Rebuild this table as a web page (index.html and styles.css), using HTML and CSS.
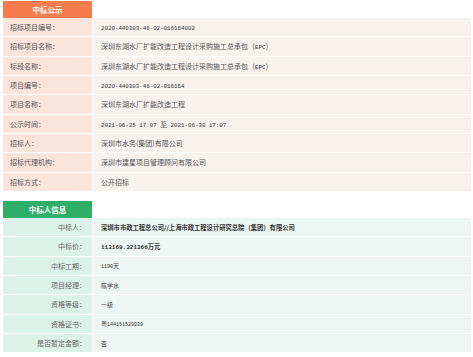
FILE: index.html
```html
<!DOCTYPE html>
<html lang="zh-CN">
<head>
  <meta charset="UTF-8" />
  <title>中标公示</title>
  <link rel="stylesheet" href="styles.css">
</head>
<body>
  <div class="page">
    <div class="block notice">
      <div class="tab">中标公示</div>
      <table class="info">
        <tr><th>招标项目编号：</th><td><span class="num">2020-440303-46-02-016164002</span></td></tr>
        <tr><th>招标项目名称：</th><td>深圳东湖水厂扩能改造工程设计采购施工总承包（<span class="num">EPC</span>）</td></tr>
        <tr><th>标段名称：</th><td>深圳东湖水厂扩能改造工程设计采购施工总承包（<span class="num">EPC</span>）</td></tr>
        <tr><th>项目编号：</th><td><span class="num">2020-440303-46-02-016164</span></td></tr>
        <tr><th>项目名称：</th><td>深圳东湖水厂扩能改造工程</td></tr>
        <tr><th>公示时间：</th><td><span class="num">2021-06-25 17:07 </span>至<span class="num"> 2021-06-30 17:07</span></td></tr>
        <tr><th>招标人：</th><td>深圳市水务(集团)有限公司</td></tr>
        <tr><th>招标代理机构：</th><td>深圳市建星项目管理顾问有限公司</td></tr>
        <tr><th>招标方式：</th><td>公开招标</td></tr>
      </table>
    </div>

    <div class="block winner">
      <div class="tab">中标人信息</div>
      <table class="info">
        <tr><th>中标人：</th><td class="strong">深圳市市政工程总公司//上海市政工程设计研究总院（集团）有限公司</td></tr>
        <tr><th>中标价：</th><td class="strong"><span class="num">113169.321366</span>万元</td></tr>
        <tr><th>中标工期：</th><td><span class="num">1190</span>天</td></tr>
        <tr><th>项目经理：</th><td>陈学水</td></tr>
        <tr><th>资格等级：</th><td>一级</td></tr>
        <tr><th>资格证书：</th><td>粤<span class="num">144151529939</span></td></tr>
        <tr><th>是否暂定金额：</th><td>否</td></tr>
      </table>
    </div>
  </div>
</body>
</html>
```

FILE: styles.css
```css
body {
  margin: 0;
  background: #ffffff;
  font-family: "Noto Sans CJK SC", sans-serif;
  font-size: 7px;
  color: #555555;
}

.page {
  padding: 1px 2px 0 2px;
}

.block {
  margin-bottom: 9px;
}

.tab {
  width: 89px;
  height: 17px;
  line-height: 17px;
  margin-left: 1px;
  text-align: center;
  color: #ffffff;
  font-weight: bold;
  font-size: 7.5px;
}

.info {
  width: 470px;
  border-collapse: separate;
  border-spacing: 1px;
  margin-top: -1px;
}

.info tr {
  height: 18.33px;
}

.info th,
.info td {
  box-sizing: border-box;
  padding: 0;
  font-weight: normal;
  white-space: nowrap;
}

.info th {
  width: 89px;
}

.info td {
  padding-left: 8px;
}

.num {
  font-family: "Liberation Mono", monospace;
  font-size: 5.8px;
  color: #333333;
}

/* 中标公示 */
.notice .tab {
  background: #f77b4d;
}

.notice th {
  background: #fbe4dc;
  text-align: left;
  padding-left: 7px;
}

.notice td {
  background: #f8f2ef;
}

/* 中标人信息 */
.winner .tab {
  background: #2fae68;
}

.winner th {
  background: #dcf1e8;
  text-align: right;
  padding-right: 6px;
  color: #666666;
}

.winner td {
  background: #edf6f3;
  color: #444444;
  font-size: 6px;
}

.winner td .num {
  font-size: 5px;
}

.winner td.strong {
  font-weight: bold;
  font-size: 6.3px;
  color: #333333;
}

.winner td.strong .num {
  font-size: 6px;
}
```
